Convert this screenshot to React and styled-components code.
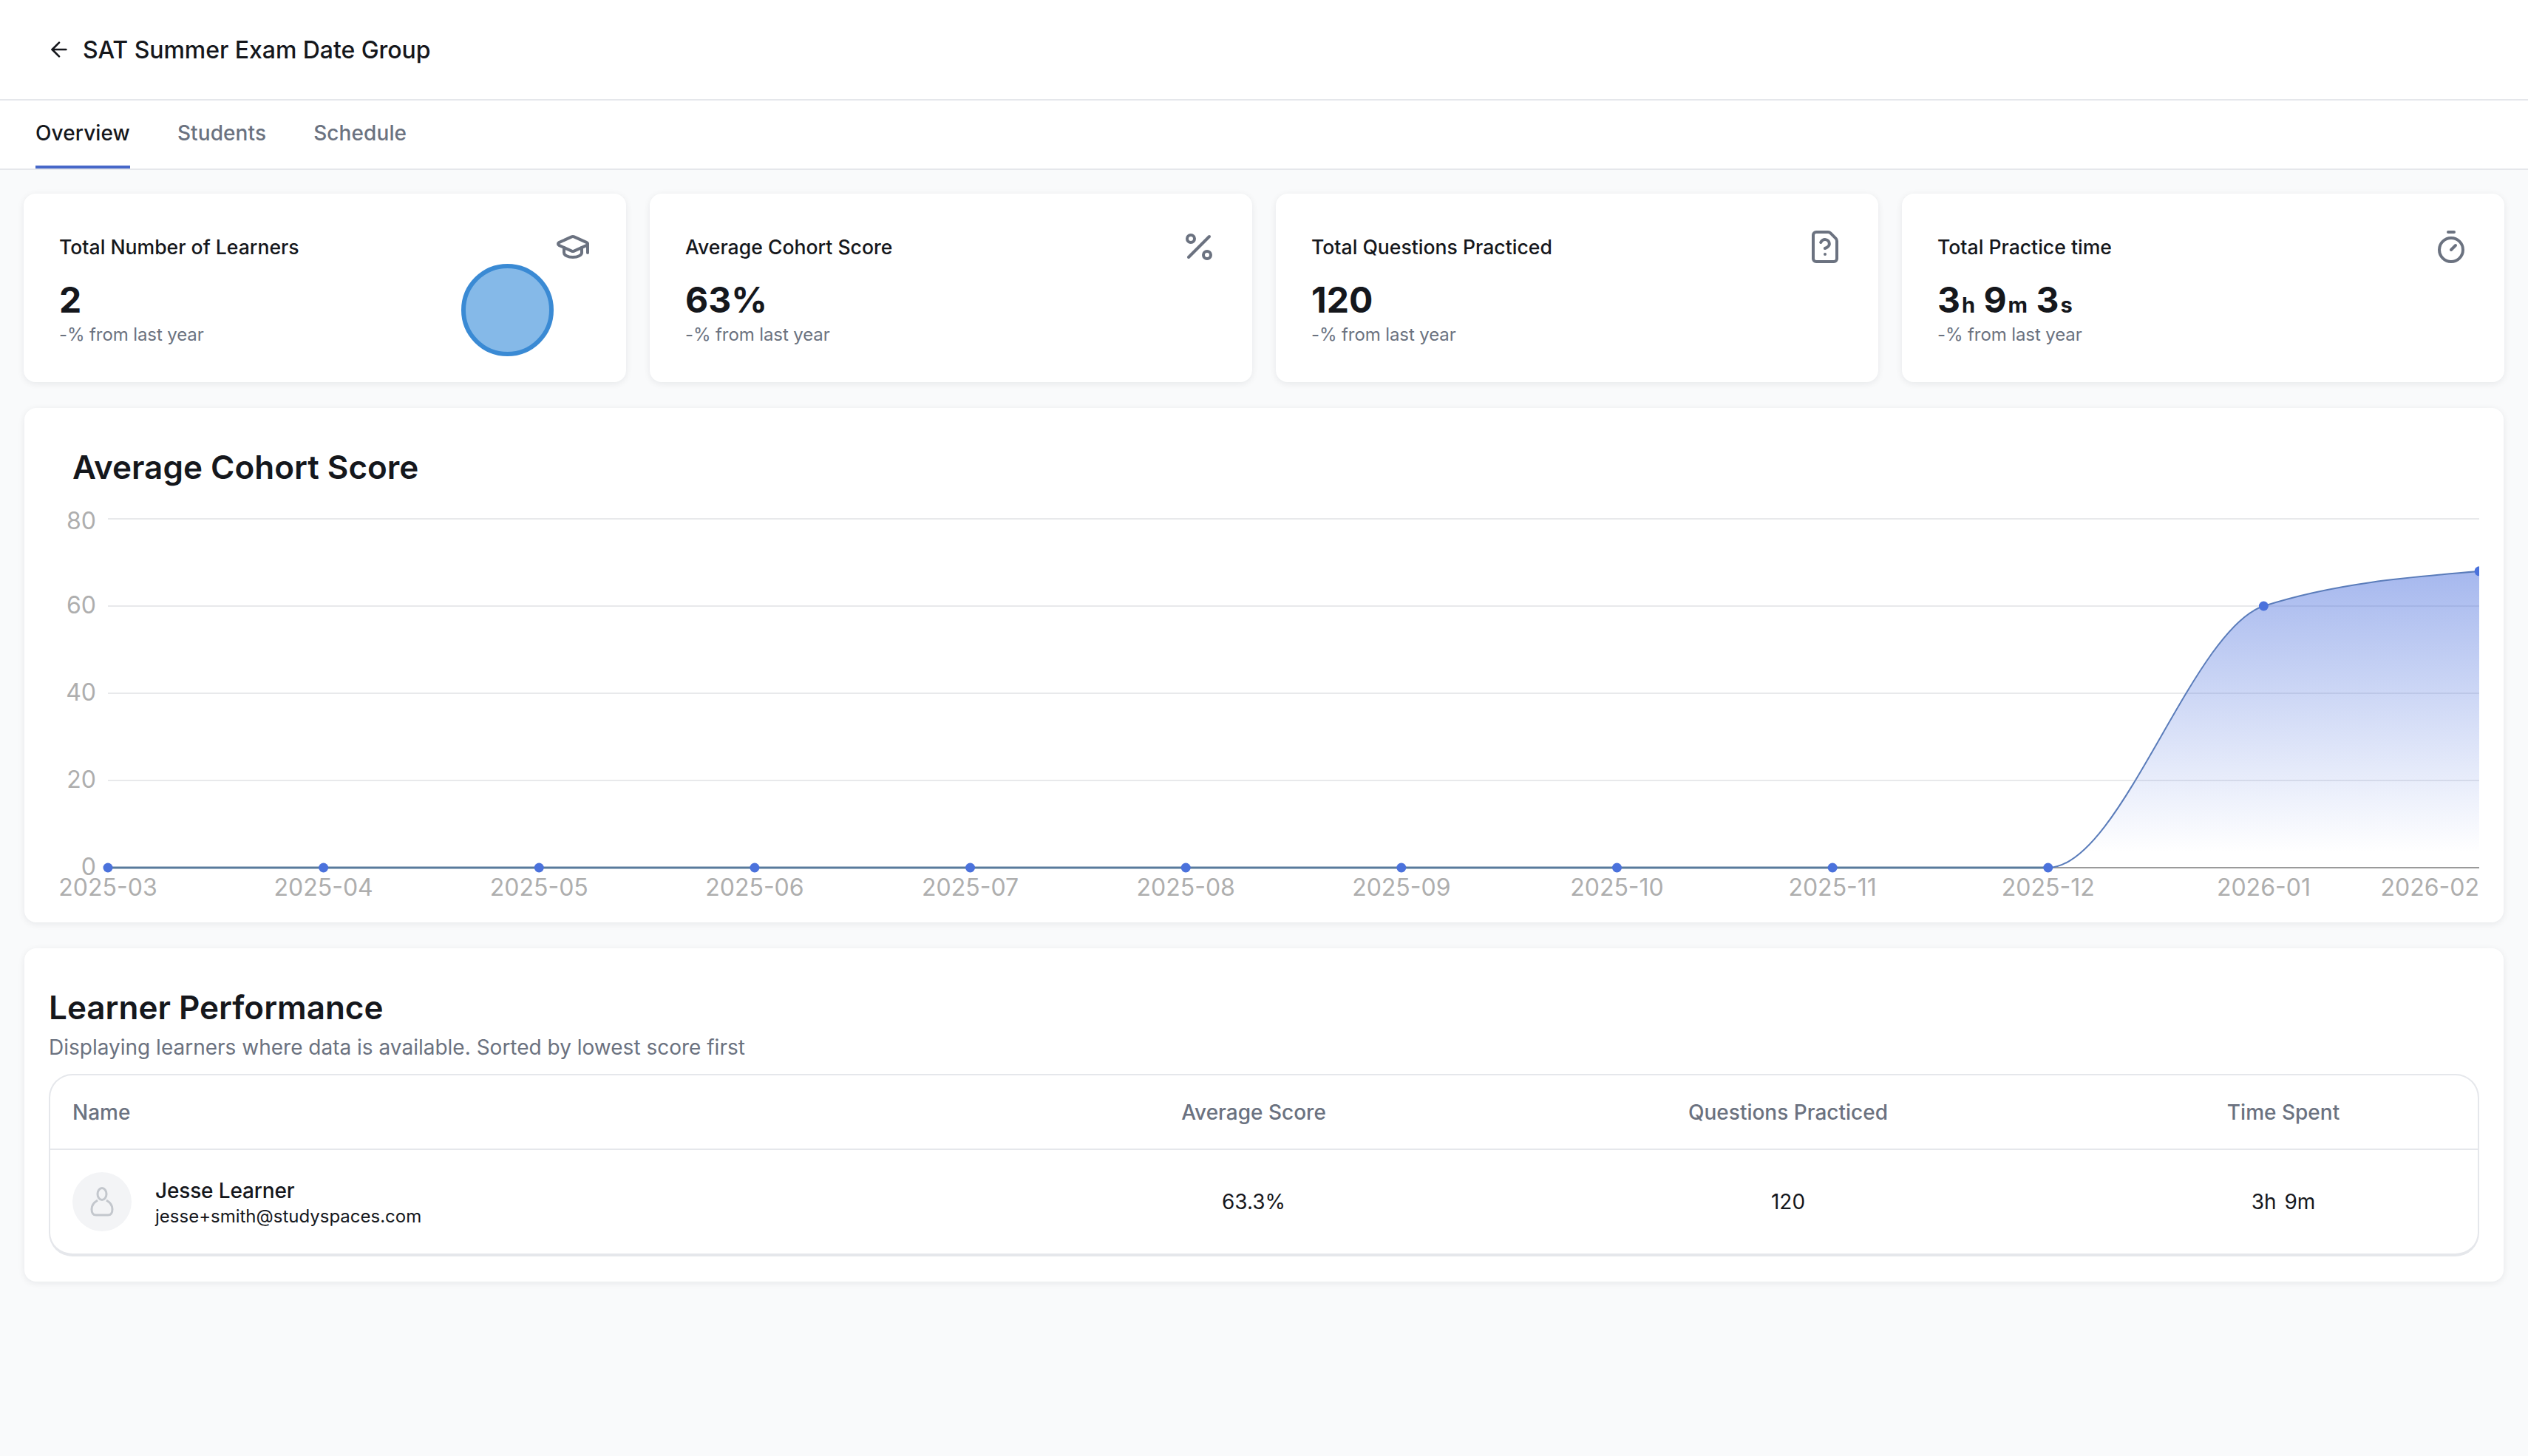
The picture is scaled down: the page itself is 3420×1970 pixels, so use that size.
import React from 'react';
import styled, { createGlobalStyle } from 'styled-components';
import { ArrowLeft, GraduationCap, Percent, FileQuestion, Timer } from 'lucide-react';

const GlobalStyle = createGlobalStyle`
    html, body {
        margin: 0;
        background: #f9fafb;
        font-family: Inter, "Liberation Sans", sans-serif;
        color: #15171c;
    }
    * {
        box-sizing: border-box;
    }
`;

const Page = styled.div`
    width: 3420px;
    min-height: 1970px;
    background: #f9fafb;
`;

const Header = styled.header`
    height: 136px;
    display: flex;
    align-items: center;
    gap: 16px;
    padding: 0 64px;
    background: #fff;
    border-bottom: 2px solid #e5e7eb;
`;

const HeaderTitle = styled.h1`
    margin: 0;
    font-size: 32px;
    font-weight: 500;
    letter-spacing: -0.05px;
`;

const Tabs = styled.nav`
    height: 94px;
    display: flex;
    gap: 64px;
    padding: 0 48px;
    background: #fff;
    border-bottom: 2px solid #e5e7eb;
`;

const Tab = styled.div`
    height: 92px;
    padding-top: 27px;
    font-size: 28px;
    font-weight: 500;
    letter-spacing: 0.1px;
    color: ${(p) => (p.$active ? '#15171c' : '#6b7280')};
    border-bottom: 4px solid ${(p) => (p.$active ? '#4667c8' : 'transparent')};
`;

const Main = styled.main`
    display: flex;
    flex-direction: column;
    gap: 35px;
    padding: 32px 32px 0;
`;

const StatRow = styled.section`
    display: grid;
    grid-template-columns: repeat(4, 1fr);
    gap: 32px;
`;

const Panel = styled.div`
    position: relative;
    background: #fff;
    border-radius: 16px;
    box-shadow: 0 2px 10px rgba(17, 24, 39, 0.08);
`;

const StatCard = styled(Panel)`
    height: 255px;
    padding: 52px 48px 0;
`;

const StatHead = styled.div`
    height: 40px;
    display: flex;
    align-items: center;
    justify-content: space-between;
    font-size: 26.6px;
    font-weight: 500;
    color: #15171c;

    svg {
        color: #6b7280;
    }
`;

const StatValue = styled.div`
    margin-top: 22px;
    height: 60px;
    font-size: 48px;
    line-height: 60px;
    font-weight: 700;
`;

const Unit = styled.span`
    font-size: 29px;
    margin-left: 2px;
`;

const StatNote = styled.div`
    margin-top: 2px;
    font-size: 24px;
    letter-spacing: -0.1px;
    color: #6b7280;
`;

const Bubble = styled.div`
    position: absolute;
    left: 592px;
    top: 95px;
    width: 125px;
    height: 125px;
    border-radius: 50%;
    background: #85b9e8;
    border: 6px solid #3a8ad4;
`;

const ChartCard = styled(Panel)`
    height: 696px;
    margin: 0 1px;
`;

const ChartTitle = styled.h2`
    margin: 0;
    height: 128px;
    padding: 54px 0 0 65px;
    font-size: 44px;
    line-height: 52px;
    font-weight: 600;
`;

const ChartSvg = styled.svg`
    display: block;
    width: 3354px;
    height: 568px;
`;

const TableCard = styled(Panel)`
    height: 451px;
    margin: 0 1px;
    padding: 50px 33px 0;
`;

const TableTitle = styled.h2`
    margin: 0;
    font-size: 44px;
    line-height: 60px;
    font-weight: 600;
`;

const TableNote = styled.p`
    margin: 4px 0 16px;
    font-size: 28px;
    line-height: 40px;
    color: #6b7280;
`;

const TableBox = styled.div`
    border: 2px solid #e5e7eb;
    border-bottom-width: 4px;
    border-radius: 32px;
    overflow: hidden;
`;

const Row = styled.div`
    display: grid;
    grid-template-columns: 1312px 632px 814px 1fr;
    align-items: center;
    height: ${(p) => (p.$head ? '101px' : '140px')};
    font-size: 28px;
    font-weight: ${(p) => (p.$head ? 500 : 400)};
    color: ${(p) => (p.$head ? '#6b7280' : '#15171c')};
    border-bottom: ${(p) => (p.$head ? '2px solid #e5e7eb' : '0')};
`;

const NameCell = styled.div`
    display: flex;
    align-items: center;
    gap: 32px;
    padding-left: 30px;
`;

const Centered = styled.div`
    text-align: center;
`;

const SpacedValue = styled(Centered)`
    word-spacing: 3px;
`;

const Avatar = styled.div`
    width: 80px;
    height: 80px;
    display: flex;
    align-items: center;
    justify-content: center;
    border-radius: 50%;
    background: #f3f4f6;
    color: #c3c7cd;
`;

const LearnerText = styled.div`
    padding-top: 3px;
`;

const LearnerName = styled.div`
    font-size: 28px;
    font-weight: 500;
    line-height: 36px;
    letter-spacing: -0.15px;
`;

const LearnerEmail = styled.div`
    font-size: 24px;
    line-height: 34px;
`;

const stats = [
    { title: 'Total Number of Learners', Icon: GraduationCap, value: '2', bubble: true },
    { title: 'Average Cohort Score', Icon: Percent, value: '63%' },
    { title: 'Total Questions Practiced', Icon: FileQuestion, value: '120' },
    {
        title: 'Total Practice time',
        Icon: Timer,
        value: (
            <>
                3<Unit>h</Unit> 9<Unit>m</Unit> 3<Unit>s</Unit>
            </>
        ),
    },
];

const months = ['2025-03', '2025-04', '2025-05', '2025-06', '2025-07', '2025-08', '2025-09', '2025-10', '2025-11', '2025-12', '2026-01', '2026-02'];
const xAt = (i) => 146 + i * 291.64;
const ticks = [80, 60, 40, 20, 0];
const yAt = (v) => 1174 - v * 5.9;
const values = [0, 0, 0, 0, 0, 0, 0, 0, 0, 0, 60, 68];

const rise = 'M2770.8 1174 C2868 1174 2965 851 3062.4 820 C3159 789 3257 781 3354 773';
const area = `${rise} L3354 1174 Z`;

function PersonIcon() {
    return (
        <svg width="44" height="44" viewBox="0 0 44 44" fill="none" stroke="currentColor" strokeWidth="3">
            <ellipse cx="22" cy="11.5" rx="6" ry="8" />
            <path d="M16 20 C11 23 8 27 8 32 C8 38 10 40 14 40 H30 C34 40 36 38 36 32 C36 27 33 23 28 20" />
        </svg>
    );
}

function Chart() {
    return (
        <ChartSvg viewBox="33 680 3354 568">
            <defs>
                <linearGradient id="areaFill" x1="0" y1="0" x2="0" y2="1">
                    <stop offset="0" stopColor="#4d71dd" stopOpacity="0.5" />
                    <stop offset="0.95" stopColor="#4d71dd" stopOpacity="0" />
                </linearGradient>
                <clipPath id="plot">
                    <rect x="130" y="680" width="3224" height="520" />
                </clipPath>
            </defs>
            {ticks.map((t) => (
                <g key={t}>
                    <line x1="146" x2="3354" y1={yAt(t)} y2={yAt(t)} stroke={t === 0 ? '#9a9a9a' : '#e8e9eb'} strokeWidth="2" />
                    <text x="130" y={yAt(t) + (t === 80 ? 14 : 10)} textAnchor="end" fontSize="32" fill="#aeaeae">{t}</text>
                </g>
            ))}
            <g clipPath="url(#plot)">
                <path d={area} fill="url(#areaFill)" />
                <line x1="146" x2="2771" y1="1174" y2="1174" stroke="#587a9c" strokeWidth="3" />
                <path d={rise} fill="none" stroke="#5a7cba" strokeWidth="2" />
                {values.map((v, i) => (
                    <circle key={months[i]} cx={xAt(i)} cy={yAt(v)} r="6.5" fill="#4b72dc" />
                ))}
            </g>
            {months.map((m, i) => (
                <text
                    key={m}
                    x={i === 11 ? 3354 : xAt(i)}
                    y="1212"
                    textAnchor={i === 11 ? 'end' : 'middle'}
                    fontSize="32"
                    fill="#aeaeae"
                >
                    {m}
                </text>
            ))}
        </ChartSvg>
    );
}

function App() {
    return (
        <Page>
            <GlobalStyle />
            <Header>
                <ArrowLeft size={32} strokeWidth={2} />
                <HeaderTitle>SAT Summer Exam Date Group</HeaderTitle>
            </Header>
            <Tabs>
                <Tab $active>Overview</Tab>
                <Tab>Students</Tab>
                <Tab>Schedule</Tab>
            </Tabs>
            <Main>
                <StatRow>
                    {stats.map(({ title, Icon, value, bubble }) => (
                        <StatCard key={title}>
                            <StatHead>
                                {title}
                                <Icon size={48} strokeWidth={2} />
                            </StatHead>
                            <StatValue>{value}</StatValue>
                            <StatNote>-% from last year</StatNote>
                            {bubble && <Bubble />}
                        </StatCard>
                    ))}
                </StatRow>
                <ChartCard>
                    <ChartTitle>Average Cohort Score</ChartTitle>
                    <Chart />
                </ChartCard>
                <TableCard>
                    <TableTitle>Learner Performance</TableTitle>
                    <TableNote>Displaying learners where data is available. Sorted by lowest score first</TableNote>
                    <TableBox>
                        <Row $head>
                            <NameCell>Name</NameCell>
                            <Centered>Average Score</Centered>
                            <Centered>Questions Practiced</Centered>
                            <Centered>Time Spent</Centered>
                        </Row>
                        <Row>
                            <NameCell>
                                <Avatar>
                                    <PersonIcon />
                                </Avatar>
                                <LearnerText>
                                    <LearnerName>Jesse Learner</LearnerName>
                                    <LearnerEmail>jesse+smith@studyspaces.com</LearnerEmail>
                                </LearnerText>
                            </NameCell>
                            <Centered>63.3%</Centered>
                            <Centered>120</Centered>
                            <SpacedValue>3h 9m</SpacedValue>
                        </Row>
                    </TableBox>
                </TableCard>
            </Main>
        </Page>
    );
}

export default App;
